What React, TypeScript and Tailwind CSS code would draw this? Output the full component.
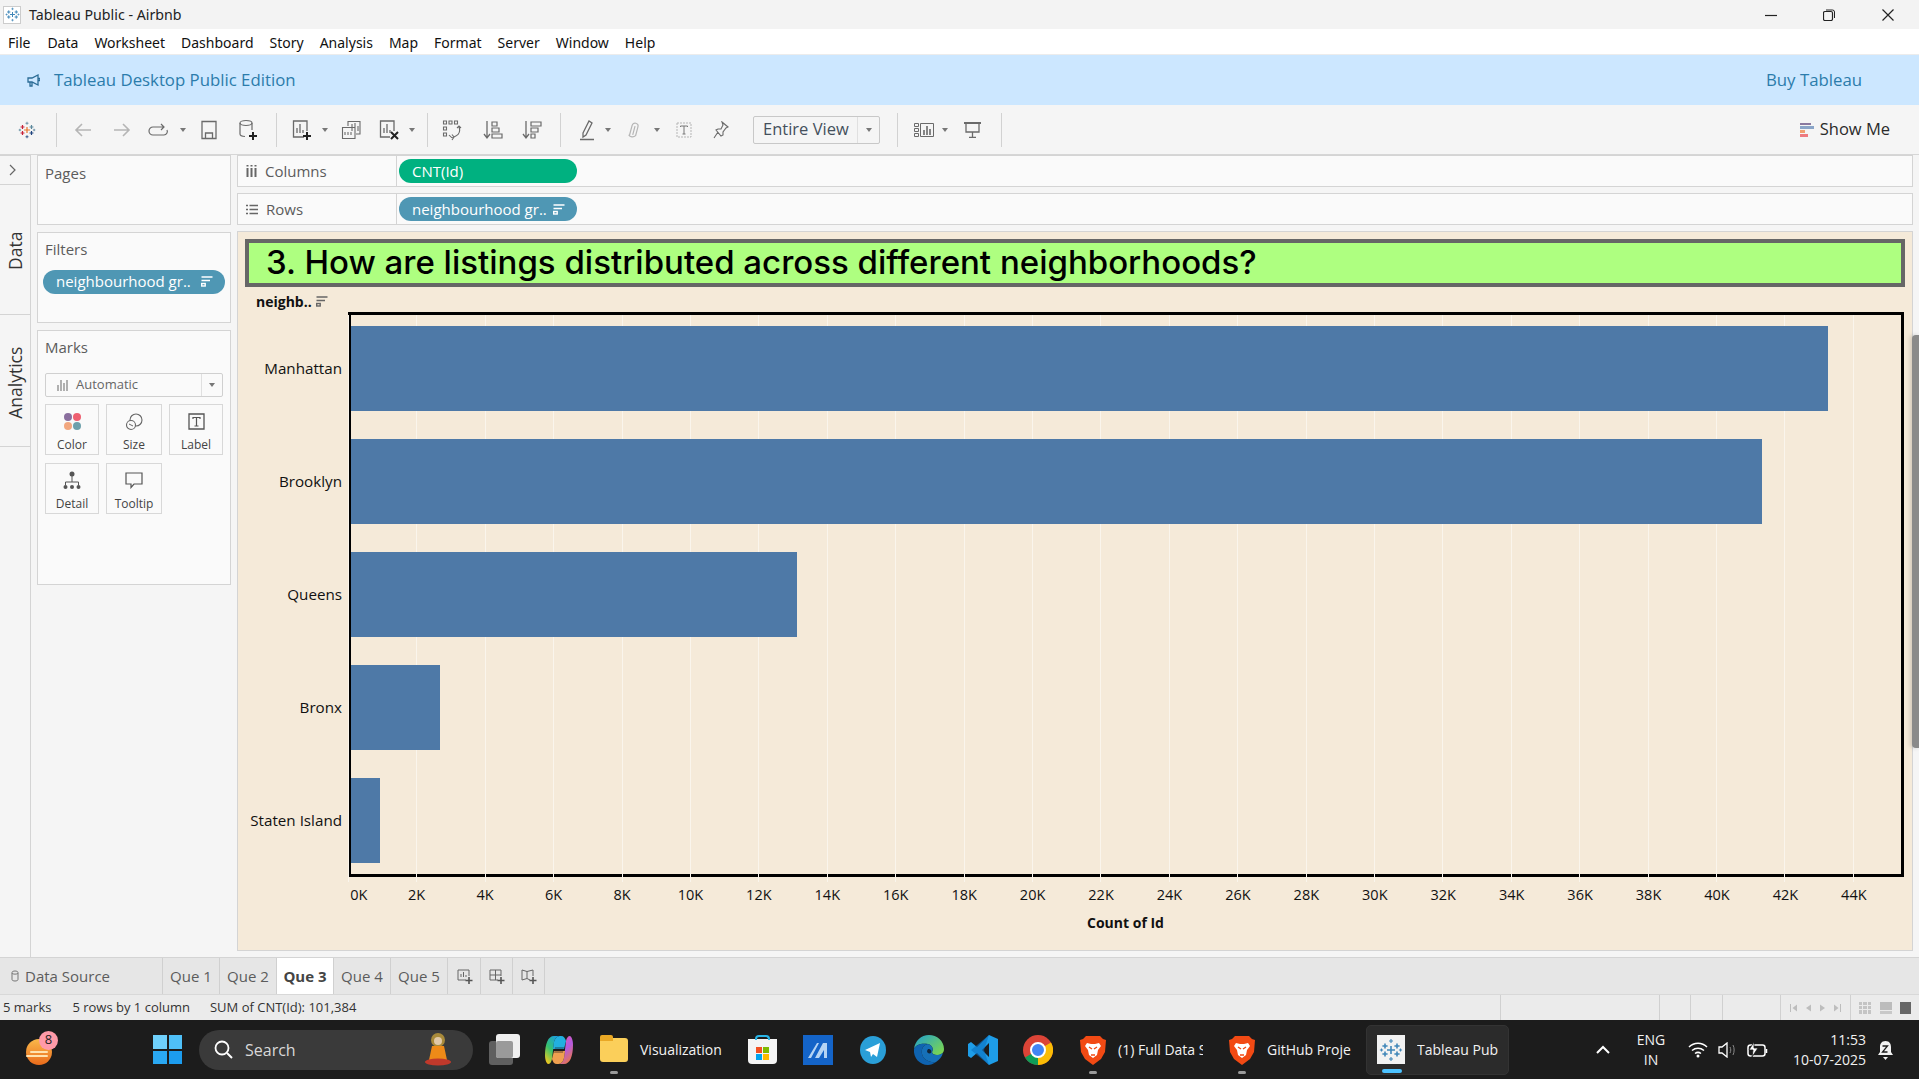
import type { ReactNode } from "react";

const TICKS = Array.from({ length: 23 }, (_, i) => i * 2);
const PX_PER_K = 34.2;

const BARS = [
  { name: "Manhattan", count: 43280 },
  { name: "Brooklyn", count: 41345 },
  { name: "Queens", count: 13130 },
  { name: "Bronx", count: 2690 },
  { name: "Staten Island", count: 939 },
];

const MENU = [
  { label: "File", cls: "ml-[8px]" },
  { label: "Data", cls: "ml-[17px]" },
  { label: "Worksheet", cls: "ml-[16px]" },
  { label: "Dashboard", cls: "ml-[16px]" },
  { label: "Story", cls: "ml-[16px]" },
  { label: "Analysis", cls: "ml-[16px]" },
  { label: "Map", cls: "ml-[16px]" },
  { label: "Format", cls: "ml-[16px]" },
  { label: "Server", cls: "ml-[16px]" },
  { label: "Window", cls: "ml-[16px]" },
  { label: "Help", cls: "ml-[16px]" },
];

function Svg({ w, h, className, children }: { w: number; h: number; className?: string; children: ReactNode }) {
  return (
    <svg width={w} height={h} viewBox={`0 0 ${w} ${h}`} fill="none" stroke="currentColor" className={`shrink-0 ${className ?? ""}`}>
      {children}
    </svg>
  );
}

function Caret({ className }: { className?: string }) {
  return <div className={`h-0 w-0 shrink-0 border-x-[3px] border-t-[4px] border-x-transparent border-t-[#777] ${className ?? ""}`} />;
}

function Sep({ className }: { className?: string }) {
  return <div className={`h-[34px] w-px shrink-0 bg-[#d2d2d2] ${className ?? ""}`} />;
}

function SortIcon({ color }: { color: string }) {
  return (
    <Svg w={12} h={11} className="shrink-0">
      <g stroke={color} strokeWidth="1.4">
        <path d="M0.5 1h11M0.5 4.5h8.5" />
        <rect x="0.7" y="7.5" width="3.5" height="2.5" />
      </g>
    </Svg>
  );
}

function TableauLogo({ size, mono }: { size: number; mono?: boolean }) {
  const c = mono
    ? ["#3f86b8", "#3f86b8", "#3f86b8", "#3f86b8", "#3f86b8"]
    : ["#e8762d", "#c72037", "#5b879b", "#1f447e", "#59879b"];
  const plus = (x: number, y: number, r: number, col: string) => (
    <path d={`M${x - r} ${y}h${r * 2}M${x} ${y - r}v${r * 2}`} stroke={col} strokeWidth={r > 2 ? 1.6 : 1.1} />
  );
  return (
    <svg width={size} height={size} viewBox="0 0 24 24" fill="none" className="shrink-0">
      {plus(12, 12, 4, c[0])}
      {plus(6, 8, 2.6, c[1])}
      {plus(18, 8, 2.6, c[2])}
      {plus(6, 16, 2.6, c[1])}
      {plus(18, 16, 2.6, c[3])}
      {plus(12, 3, 2, c[2])}
      {plus(12, 21, 2, c[3])}
      {plus(2.5, 12, 1.6, c[4])}
      {plus(21.5, 12, 1.6, c[2])}
    </svg>
  );
}

function Pill({ label, color, sort, className }: { label: string; color: string; sort?: boolean; className?: string }) {
  return (
    <div className={`flex items-center justify-between rounded-full pl-[13px] pr-[12px] text-[15px] text-white ${color} ${className ?? ""}`}>
      <span className="leading-none">{label}</span>
      {sort && <SortIcon color="#ffffff" />}
    </div>
  );
}

function Shelf({ icon, label, children, className }: { icon: ReactNode; label: string; children: ReactNode; className?: string }) {
  return (
    <div className={`flex h-[32px] items-center border border-[#d4d4d4] bg-[#fafafa] ${className ?? ""}`}>
      <div className="flex h-full w-[159px] items-center border-r border-[#d4d4d4] pl-[8px] text-[15px] text-[#5c5c5c]">
        {icon}
        <span className="ml-[8px]">{label}</span>
      </div>
      {children}
    </div>
  );
}

function MarkBtn({ label, icon, className }: { label: string; icon: ReactNode; className?: string }) {
  return (
    <div className={`flex h-[51px] flex-col items-center justify-between border border-[#d8d8d8] bg-[#fafafa] pb-[2px] pt-[7px] text-[12px] leading-[14px] text-[#444] ${className ?? ""}`}>
      <div className="flex h-[20px] items-center justify-center">{icon}</div>
      <span>{label}</span>
    </div>
  );
}

function Chart() {
  return (
    <div className="mx-[7px] flex flex-col">
      <div className="flex h-[48px] items-center border-[4px] border-[#666666] bg-[#aeff80] pl-[17px] font-['Inter',sans-serif] text-[33px] font-medium text-black">
        3. How are listings distributed across different neighborhoods?
      </div>
      <div className="flex h-[25px] items-center pl-[11px] pt-[3px] text-[14px] font-bold text-[#111]">
        <span>neighb..</span>
        <span className="ml-[4px]">
          <SortIcon color="#666666" />
        </span>
      </div>
      <div className="flex items-start">
        <div className="flex w-[103px] flex-col gap-[28px] pt-[14px]">
          {BARS.map((b) => (
            <div key={b.name} className="flex h-[85px] items-center justify-end pr-[6px] text-[15.2px] font-medium text-[#111]">
              {b.name}
            </div>
          ))}
        </div>
        <div className="relative h-[565px] w-[1556px] border-[3px] border-black">
          {TICKS.map((t) => (
            <div
              key={t}
              className="absolute -bottom-[8px] -top-0 w-px bg-[#faf5ec]"
              style={{ left: t * PX_PER_K - 3 }}
            />
          ))}
          <div className="relative flex flex-col gap-[28px] pt-[11px]">
            {BARS.map((b) => (
              <div
                key={b.name}
                className="h-[85px] bg-[#4e79a7]"
                style={{ width: (b.count / 1000) * PX_PER_K - 3 }}
              />
            ))}
          </div>
        </div>
      </div>
      <div className="ml-[69px] flex h-[35px] items-center text-[14.5px] text-[#111]">
        {TICKS.map((t) => (
          <div key={t} className={`w-[68.45px] shrink-0 text-center ${t === 0 ? "pl-[21px]" : ""}`}>
            {t}K
          </div>
        ))}
      </div>
      <div className="ml-[103px] flex w-[1556px] justify-center pr-[1px] text-[14px] font-bold text-[#111]">Count of Id</div>
    </div>
  );
}

function Toolbar() {
  const on = "text-[#6a6a6a]";
  const off = "text-[#b5b5b5]";
  return (
    <div className="flex h-[50px] shrink-0 items-center border-b border-[#d6d6d6] bg-[#f5f5f5] pl-[18px] pr-[29px]">
      <TableauLogo size={18} />
      <Sep className="ml-[20px]" />
      <Svg w={20} h={16} className={`ml-[16px] ${off}`}>
        <path d="M18 8H3M9 2L3 8l6 6" strokeWidth="1.6" />
      </Svg>
      <Svg w={20} h={16} className={`ml-[19px] ${off}`}>
        <path d="M2 8h15M11 2l6 6-6 6" strokeWidth="1.6" />
      </Svg>
      <Svg w={22} h={14} className={`ml-[16px] ${on}`}>
        <path d="M16 4H5a3.5 3.5 0 0 0 0 8h11a3.5 3.5 0 0 0 3-5M13 1l3 3-3 3" strokeWidth="1.2" />
      </Svg>
      <Caret className="ml-[10px]" />
      <Svg w={18} h={20} className={`ml-[14px] ${on}`}>
        <path d="M2 1.5h14v17H2zM5.5 18v-5h7v5" strokeWidth="1.3" />
      </Svg>
      <Svg w={20} h={22} className={`ml-[20px] ${on}`}>
        <ellipse cx="8" cy="4" rx="6" ry="2.5" strokeWidth="1.2" />
        <path d="M2 4v11c0 1.4 2 2.4 5 2.5M14 4v7" strokeWidth="1.2" />
        <path d="M15 13v8M11 17h8" stroke="#222" strokeWidth="2" />
      </Svg>
      <Sep className="ml-[18px]" />
      <Svg w={20} h={22} className={`ml-[15px] ${on}`}>
        <path d="M12 18H1.5V2H15v10M5 14V9M8 14V5M11 14v-3" strokeWidth="1.3" />
        <path d="M15 13v8M11 17h8" stroke="#222" strokeWidth="2" />
      </Svg>
      <Caret className="ml-[10px]" />
      <Svg w={20} h={20} className={`ml-[13px] ${on}`}>
        <path d="M7 6V1.5h12V14h-4M1.5 7.5H14V18.5H1.5zM11 4v7M14 3v6M17 6v5M4 15v-3M7 15v-3M10 15v-3" strokeWidth="1.1" />
      </Svg>
      <Svg w={20} h={22} className={`ml-[18px] ${on}`}>
        <path d="M11 18H1.5V2H15v10M5 14V9M8 14V5M11 14v-3" strokeWidth="1.3" />
        <path d="M12 13l7 7M19 13l-7 7" stroke="#222" strokeWidth="2" />
      </Svg>
      <Caret className="ml-[10px]" />
      <Sep className="ml-[12px]" />
      <Svg w={20} h={22} className={`ml-[14px] ${on}`}>
        <path d="M1.5 2h3v3h-3zM7 2h3v3H7zM12.5 2h3v3h-3zM1.5 8h3v3h-3zM1.5 14h3v3h-3zM17 8c1.5 4 0 8-5 10M7 16c1.500 2 3 3 5 3M10 15.500l2 2.500-2 3M15 9l2-2 2 2" strokeWidth="1.1" />
      </Svg>
      <Svg w={20} h={20} className={`ml-[21px] ${on}`}>
        <path d="M4 1v16M1 14l3 4 3-4" strokeWidth="1.3" />
        <path d="M9 2h5v4H9zM9 8h7v4H9zM9 14h10v4H9z" strokeWidth="1.2" />
      </Svg>
      <Svg w={20} h={20} className={`ml-[19px] ${on}`}>
        <path d="M4 1v16M1 14l3 4 3-4" strokeWidth="1.3" />
        <path d="M9 2h10v4H9zM9 8h7v4H9zM9 14h4v4H9z" strokeWidth="1.2" />
      </Svg>
      <Sep className="ml-[18px]" />
      <Svg w={16} h={22} className={`ml-[18px] ${on}`}>
        <path d="M4 14L10 2l3 2-6 12-3 2zM1 20.500h14" strokeWidth="1.3" />
      </Svg>
      <Caret className="ml-[10px]" />
      <Svg w={16} h={20} className={`ml-[15px] ${off}`}>
        <path d="M5 16V6a3 3 0 0 1 6 0v9a4.500 4.500 0 0 1-7 1M8 6v9" strokeWidth="1.2" transform="rotate(15 8 10)" />
      </Svg>
      <Caret className="ml-[12px]" />
      <Svg w={16} h={16} className={`ml-[16px] ${off}`}>
        <path d="M1 1h14v14H1z" strokeWidth="1" strokeDasharray="2 1" />
        <path d="M4.500 5V4h7v1M8 4v8M6.500 12h3" stroke="#777" strokeWidth="1" />
      </Svg>
      <Svg w={16} h={18} className={`ml-[21px] ${on}`}>
        <path d="M9 1l6 5-2 1-3 4 0 3-2 1-5-6 2-1h3l2-4zM5 11l-4 6" strokeWidth="1.1" />
      </Svg>
      <div className="ml-[24px] flex h-[28px] w-[127px] shrink-0 items-center rounded-[2px] border border-[#c8c8c8] text-[16.5px] text-[#44505c]">
        <span className="w-[103px] pl-[9px]">Entire View</span>
        <div className="flex h-full flex-1 items-center justify-center border-l border-[#e0e0e0]">
          <Caret />
        </div>
      </div>
      <Sep className="ml-[17px]" />
      <Svg w={20} h={14} className={`ml-[16px] ${on}`}>
        <path d="M0.500 0.500h4v3h-4zM0.500 5.500h4v3h-4zM0.500 10.500h4v3h-4zM6.500 0.500h13v13h-13z" strokeWidth="1" />
        <path d="M10 12V7M13 12V3M16 12V6" strokeWidth="1.6" />
      </Svg>
      <Caret className="ml-[8px]" />
      <Svg w={17} h={16} className={`ml-[16px] ${on}`}>
        <path d="M0 1h17" strokeWidth="2" />
        <path d="M2 1v9h13V1M8.500 10v5M5 15.500h7" strokeWidth="1.3" />
      </Svg>
      <Sep className="ml-[20px]" />
      <div className="ml-auto flex items-center text-[16.5px] text-[#2b2b2b]">
        <div className="flex h-[14px] w-[14px] flex-col gap-px">
          <div className="h-[3px] w-[11px] bg-[#8a7aa0]" />
          <div className="h-[3px] w-[14px] bg-[#8aa5c8]" />
          <div className="h-[3px] w-[5px] bg-[#f0a070]" />
          <div className="h-[3px] w-[8px] bg-[#ee7a80]" />
        </div>
        <span className="ml-[6px]">Show Me</span>
      </div>
    </div>
  );
}

function Sidebar() {
  return (
    <div className="ml-[6px] flex w-[194px] shrink-0 flex-col gap-[7px]">
      <div className="h-[70px] border border-[#d4d4d4] bg-[#fafafa] pl-[7px] pt-[6px] text-[15px] text-[#5c5c5c]">Pages</div>
      <div className="h-[91px] border border-[#d4d4d4] bg-[#fafafa] pt-[5px] text-[15px] text-[#5c5c5c]">
        <div className="pl-[7px]">Filters</div>
        <Pill label="neighbourhood gr.." color="bg-[#4f97b4]" sort className="ml-[5px] mt-[9px] h-[24px] w-[182px]" />
      </div>
      <div className="h-[255px] border border-[#d4d4d4] bg-[#fafafa] px-[7px] pt-[5px] text-[15px] text-[#5c5c5c]">
        <div>Marks</div>
        <div className="mt-[14px] flex h-[24px] items-center rounded-[2px] border border-[#d0d0d0] text-[13px] text-[#666]">
          <div className="flex w-[155px] items-center pl-[11px]">
            <Svg w={11} h={12} className="text-[#666]">
              <path d="M1 12V6M4 12V1M7 12V4M10 12V1" strokeWidth="1" />
            </Svg>
            <span className="ml-[8px]">Automatic</span>
          </div>
          <div className="flex h-full flex-1 items-center justify-center border-l border-[#e0e0e0]">
            <Caret />
          </div>
        </div>
        <div className="mt-[7px] grid grid-cols-[54px_56px_54px] gap-x-[7px] gap-y-[8px]">
          <MarkBtn
            label="Color"
            icon={
              <div className="grid grid-cols-2 gap-px">
                <div className="h-[8px] w-[8px] rounded-full bg-[#8a6f9e]" />
                <div className="h-[8px] w-[8px] rounded-full bg-[#ee5f70]" />
                <div className="h-[8px] w-[8px] rounded-full bg-[#f2a77f]" />
                <div className="h-[8px] w-[8px] rounded-full bg-[#6ea0ab]" />
              </div>
            }
          />
          <MarkBtn
            label="Size"
            icon={
              <Svg w={18} h={18} className="text-[#666]">
                <circle cx="11" cy="7" r="6" strokeWidth="1.1" />
                <circle cx="6" cy="12" r="4.500" fill="#fafafa" strokeWidth="1.1" />
                <path d="M4 11l4 2" strokeWidth="1" />
              </Svg>
            }
          />
          <MarkBtn
            label="Label"
            icon={
              <Svg w={17} h={17} className="text-[#555]">
                <path d="M1 1h15v15H1z" strokeWidth="1.3" />
                <path d="M5 6V4.500h7V6M8.500 4.500V13M6.500 13h4" strokeWidth="1.2" />
              </Svg>
            }
          />
          <MarkBtn
            label="Detail"
            icon={
              <Svg w={18} h={19} className="text-[#555]">
                <circle cx="9" cy="3" r="2.500" fill="#555" stroke="none" />
                <path d="M9 5v6M2.500 14v-3h13v3" strokeWidth="1" />
                <g fill="#555" stroke="none">
                  <circle cx="2.500" cy="16" r="2" />
                  <circle cx="9" cy="16" r="2" />
                  <circle cx="15.500" cy="16" r="2" />
                </g>
              </Svg>
            }
          />
          <MarkBtn
            label="Tooltip"
            icon={
              <Svg w={18} h={17} className="text-[#555]">
                <path d="M1 1h16v11H9l-3 3.500V12H1z" strokeWidth="1.2" />
              </Svg>
            }
          />
        </div>
      </div>
    </div>
  );
}

function Rail() {
  return (
    <div className="flex w-[31px] shrink-0 flex-col border-r border-[#d4d4d4] text-[17.5px] text-[#333]">
      <div className="flex h-[30px] items-center border-b border-t border-[#d4d4d4] pl-[9px]">
        <Svg w={7} h={12} className="text-[#666]">
          <path d="M1 1l5 5-5 5" strokeWidth="1.2" />
        </Svg>
      </div>
      <div className="flex h-[130px] items-center justify-center border-b border-[#d4d4d4] pl-[2px] pt-[3px]">
        <span className="-rotate-90 leading-none">Data</span>
      </div>
      <div className="flex h-[132px] items-center justify-center border-b border-[#d4d4d4] pl-[2px] pt-[4px]">
        <span className="-rotate-90 leading-none">Analytics</span>
      </div>
    </div>
  );
}

function Tabs() {
  const sheets = ["Que 1", "Que 2", "Que 3", "Que 4", "Que 5"];
  return (
    <div className="flex h-[37px] shrink-0 items-stretch border-t border-[#d4d4d4] bg-[#e6e6e6] text-[15px] text-[#5c5c5c]">
      <div className="flex w-[163px] items-center border-r border-[#d0d0d0] pl-[11px]">
        <Svg w={8} h={12} className="text-[#777]">
          <path d="M1 2.500c0-2 6-2 6 0v7c0 2-6 2-6 0zM1 3c0 1.500 6 1.500 6 0" strokeWidth="1" />
        </Svg>
        <span className="ml-[6px]">Data Source</span>
      </div>
      {sheets.map((s) => (
        <div
          key={s}
          className={`flex w-[57px] items-center justify-center border-r border-[#d0d0d0] ${s === "Que 3" ? "bg-white font-bold text-[#444]" : ""}`}
        >
          {s}
        </div>
      ))}
      <div className="ml-px flex w-[32px] items-center justify-center border-r border-[#d0d0d0]">
        <Svg w={16} h={15} className="text-[#666]">
          <path d="M9 11H1V1h11v6M4 8V5M6.500 8V3M9 8V6" strokeWidth="1" />
          <path d="M12 8v7M8.500 11.500h7" stroke="#555" strokeWidth="1.6" />
        </Svg>
      </div>
      <div className="flex w-[32px] items-center justify-center border-r border-[#d0d0d0]">
        <Svg w={16} h={15} className="text-[#666]">
          <path d="M9 11H1V1h11v6M1 6h11M6.500 1v10" strokeWidth="1" />
          <path d="M12 8v7M8.500 11.500h7" stroke="#555" strokeWidth="1.6" />
        </Svg>
      </div>
      <div className="flex w-[32px] items-center justify-center border-r border-[#d0d0d0]">
        <Svg w={16} h={15} className="text-[#666]">
          <path d="M9 11l-3-1.500L1 11V1l5 1.500L12 1v6M6 2.500v7" strokeWidth="1" />
          <path d="M12 8v7M8.500 11.500h7" stroke="#555" strokeWidth="1.6" />
        </Svg>
      </div>
    </div>
  );
}

function StatusBar() {
  return (
    <div className="flex h-[26px] shrink-0 items-stretch border-t border-[#d8d8d8] bg-[#ebebeb] text-[13px] text-[#333]">
      <div className="flex items-center pl-[3px]">5 marks</div>
      <div className="ml-[21px] flex items-center">5 rows by 1 column</div>
      <div className="ml-[20px] flex items-center">SUM of CNT(Id): 101,384</div>
      <div className="ml-auto flex w-[159px] border-l border-[#d0d0d0]" />
      <div className="w-[31px] border-l border-[#d0d0d0]" />
      <div className="w-[32px] border-l border-[#d0d0d0]" />
      <div className="w-[58px] border-l border-[#d0d0d0]" />
      <div className="flex w-[70px] items-center justify-around border-l border-[#d0d0d0] px-[5px] text-[#bdbdbd]">
        <Svg w={7} h={8}><path d="M0.500 0v8M7 0.500L2.500 4 7 7.500z" fill="currentColor" stroke="none" /><path d="M0.500 0v8" /></Svg>
        <Svg w={5} h={8}><path d="M5 0.500L0 4l5 3.500z" fill="currentColor" stroke="none" /></Svg>
        <Svg w={5} h={8}><path d="M0 0.500L5 4 0 7.500z" fill="currentColor" stroke="none" /></Svg>
        <Svg w={7} h={8}><path d="M0 0.500L4.500 4 0 7.500z" fill="currentColor" stroke="none" /><path d="M6.500 0v8" /></Svg>
      </div>
      <div className="flex w-[69px] items-center justify-between border-l border-[#d0d0d0] px-[8px]">
        <div className="grid h-[12px] w-[12px] grid-cols-3 gap-px">
          {Array.from({ length: 9 }, (_, i) => (
            <div key={i} className="bg-[#c4c4c4]" />
          ))}
        </div>
        <div className="flex h-[12px] w-[12px] flex-col gap-px">
          <div className="h-[8px] bg-[#bcbcbc]" />
          <div className="h-[3px] bg-[#c8c8c8]" />
        </div>
        <div className="h-[12px] w-[11px] bg-[#666]" />
      </div>
    </div>
  );
}

function Dot() {
  return <div className="absolute -bottom-[9px] left-1/2 h-[3px] w-[8px] -translate-x-1/2 rounded-full bg-[#9a9a9a]" />;
}

function Brave({ className }: { className?: string }) {
  return (
    <div className={`relative shrink-0 ${className ?? ""}`}>
      <svg width="26" height="30" viewBox="0 0 26 30" className="block">
        <path d="M6 1h14l3 3 3 1-1 12-4 7-8 6-8-6-4-7L0 5l3-1z" fill="#f24a14" />
        <path d="M7 8l4 1h4l4-1 2 3-3 4-1 5-4 3-4-3-1-5-3-4z" fill="#ffffff" />
        <path d="M9 12l3 2M17 12l-3 2M11 20h4" stroke="#f24a14" strokeWidth="1.4" />
      </svg>
      <Dot />
    </div>
  );
}

function Taskbar() {
  return (
    <div className="flex h-[59px] shrink-0 items-center bg-[#1c1c1c] text-[14px] text-[#f2f2f2]">
      <div className="relative ml-[26px] h-[30px] w-[28px] shrink-0">
        <div className="absolute bottom-0 left-0 h-[26px] w-[26px] rounded-full bg-gradient-to-b from-[#f8b84a] to-[#e96a1a]" />
        <div className="absolute bottom-[12px] left-[4px] h-[2px] w-[18px] rounded bg-[#ffe3b0]" />
        <div className="absolute bottom-[8px] left-0 h-[2px] w-[22px] rounded bg-[#ffe3b0]" />
        <div className="absolute -right-[4px] -top-[4px] flex h-[19px] w-[19px] items-center justify-center rounded-full bg-[#ff9aa8] text-[13px] text-[#222]">8</div>
      </div>
      <div className="ml-[99px] grid h-[29px] w-[29px] shrink-0 grid-cols-2 gap-[2px]">
        <div className="bg-[#6fd0fb]" />
        <div className="bg-[#4fc0f8]" />
        <div className="bg-[#2aa8f2]" />
        <div className="bg-[#1c9cee]" />
      </div>
      <div className="ml-[17px] flex h-[40px] w-[274px] shrink-0 items-center rounded-full bg-[#3a3a3a] pl-[15px] pr-[22px] text-[16px] text-[#d8d8d8]">
        <Svg w={19} h={19} className="text-white">
          <circle cx="8" cy="8" r="6.500" strokeWidth="1.8" />
          <path d="M13 13l5 5" strokeWidth="2" />
        </Svg>
        <span className="ml-[12px]">Search</span>
        <svg width="26" height="36" viewBox="0 0 26 36" className="ml-auto shrink-0">
          <circle cx="13" cy="8" r="7" fill="#a88a3a" />
          <circle cx="13" cy="9" r="4" fill="#e0c8a8" />
          <path d="M7 14h12l3 14H4z" fill="#ee8a18" />
          <ellipse cx="13" cy="30" rx="13" ry="3.500" fill="#c0392b" />
        </svg>
      </div>
      <div className="relative ml-[16px] h-[31px] w-[31px] shrink-0">
        <div className="absolute bottom-0 left-0 h-[24px] w-[24px] rounded-[3px] bg-[#5f5f5f]" />
        <div className="absolute right-0 top-0 h-[24px] w-[24px] rounded-[3px] bg-[#efefef]" />
        <div className="absolute bottom-[7px] left-[7px] h-[17px] w-[17px] rounded-[2px] bg-[#9a9a9a]" />
      </div>
      <svg width="28" height="30" viewBox="0 0 28 30" className="ml-[25px] shrink-0">
        <defs>
          <linearGradient id="copL" x1="0.8" y1="0" x2="0.2" y2="1">
            <stop offset="0" stopColor="#1a9ce8" />
            <stop offset="0.55" stopColor="#36c26e" />
            <stop offset="1" stopColor="#f2c81e" />
          </linearGradient>
          <linearGradient id="copR" x1="0.2" y1="0" x2="0.8" y2="1">
            <stop offset="0" stopColor="#e85aa8" />
            <stop offset="0.5" stopColor="#b45ae0" />
            <stop offset="1" stopColor="#f07a3a" />
          </linearGradient>
        </defs>
        <path d="M9 1h7c-4 0-6 2-7 6L7 24c-.5 3-2 5-4 5-2-1-3-5-3-9C0 9 3 1 9 1z" fill="url(#copL)" />
        <path d="M19 29h-7c4 0 6-2 7-6l2-17c.5-3 2-5 4-5 2 1 3 5 3 9 0 11-3 19-9 19z" fill="url(#copR)" />
        <path d="M9 7c1-4 3-6 7-6 3 0 4 2 5 5l-2 8H8z" fill="#22b0e0" />
        <path d="M19 23c-1 4-3 6-7 6-3 0-4-2-5-5l2-8h11z" fill="#f0a050" />
        <path d="M10 12h9l-1 6H9z" fill="#1c1c1c" opacity="0.35" />
      </svg>
      <div className="relative ml-[27px] h-[24px] w-[28px] shrink-0 rounded-[3px] bg-[#fbcf5a]">
        <div className="absolute -top-[3px] left-0 h-[6px] w-[13px] rounded-t-[2px] bg-[#e9a825]" />
        <div className="absolute -bottom-[12px] left-1/2 h-[3px] w-[8px] -translate-x-1/2 rounded-full bg-[#9a9a9a]" />
      </div>
      <span className="ml-[12px] w-[84px] shrink-0 whitespace-nowrap">Visualization</span>
      <div className="relative ml-[24px] h-[25px] w-[29px] shrink-0 translate-y-[2px] rounded-b-[4px] bg-[#f4f4f4]">
        <div className="absolute -top-[4px] left-[7px] h-[5px] w-[15px] rounded-t border-x-2 border-t-2 border-[#29b6e8]" />
        <div className="absolute left-[8px] top-[8px] grid h-[13px] w-[13px] grid-cols-2 gap-px">
          <div className="bg-[#f25022]" />
          <div className="bg-[#7fba00]" />
          <div className="bg-[#00a4ef]" />
          <div className="bg-[#ffb900]" />
        </div>
      </div>
      <svg width="30" height="30" viewBox="0 0 30 30" className="ml-[26px] shrink-0">
        <rect width="30" height="30" fill="#1464c8" />
        <path d="M5 23L14 8h2L8 23zM12 23l8-15h4v15h-3v-8l-5 8z" fill="#b4d4f4" />
      </svg>
      <svg width="26" height="30" viewBox="0 0 26 30" className="ml-[27px] shrink-0">
        <ellipse cx="13" cy="15" rx="13" ry="14" fill="#2a9fd8" />
        <path d="M5 15l15-7-3 14-4-3-2 3-1-5z" fill="#ffffff" />
      </svg>
      <svg width="31" height="30" viewBox="0 0 31 30" className="ml-[27px] shrink-0">
        <defs>
          <linearGradient id="edg" x1="0" y1="0" x2="1" y2="0.8">
            <stop offset="0" stopColor="#1f9fd0" />
            <stop offset="1" stopColor="#7bd651" />
          </linearGradient>
        </defs>
        <path d="M1 14C2 6 8 0 16 0c8 0 15 6 15 14 0 4-3 6-7 6-3 0-5-1-5-3 2-3 0-7-4-8C9 8 3 9 1 14z" fill="url(#edg)" />
        <path d="M1 14c2-5 8-6 14-5-5 1-7 5-6 10 1 5 7 9 14 8-3 2-5 3-8 3C7 30 0 23 1 14z" fill="#0f63b0" />
        <path d="M9 19c-1-5 1-9 6-10 4 1 6 5 4 8 0 2 2 3 5 3 2 0 4-1 6-2-1 4-4 7-7 9-7 1-13-3-14-8z" fill="#1670b8" />
        <path d="M15 14c3 0 4 2 3 4-2 1-4 0-4-2z" fill="#12263a" />
      </svg>
      <svg width="30" height="30" viewBox="0 0 30 30" className="ml-[24px] shrink-0">
        <path d="M21 0l9 4v22l-9 4L9 18l-6 5-3-2v-12l3-2 6 5zM21 8l-7 7 7 7z" fill="#1e9de8" fillRule="evenodd" />
        <path d="M21 0L3 15l18 15-5-15z" fill="#0a70bf" opacity="0.6" />
      </svg>
      <svg width="30" height="30" viewBox="0 0 30 30" className="ml-[25px] shrink-0">
        <circle cx="15" cy="15" r="15" fill="#db4437" />
        <path d="M15 15L2 22.500A15 15 0 0 0 15 30z" fill="#0f9d58" />
        <path d="M15 15l13-7.500A15 15 0 0 1 15 30z" fill="#fbbc05" />
        <circle cx="15" cy="15" r="7" fill="#4285f4" stroke="#fff" strokeWidth="2" />
      </svg>
      <Brave className="ml-[27px]" />
      <span className="ml-[12px] w-[85px] shrink-0 overflow-hidden whitespace-nowrap">(1) Full Data S</span>
      <Brave className="ml-[26px]" />
      <span className="ml-[12px] w-[85px] shrink-0 overflow-hidden whitespace-nowrap">GitHub Proje</span>
      <div className="relative ml-[14px] flex h-[50px] w-[143px] shrink-0 items-center rounded-[5px] border border-[#333] bg-[#2b2b2b] pl-[10px]">
        <div className="flex h-[29px] w-[28px] items-center justify-center bg-[#f2f2f2]">
          <TableauLogo size={24} mono />
        </div>
        <span className="ml-[12px] w-[81px] overflow-hidden whitespace-nowrap">Tableau Pub</span>
        <div className="absolute bottom-px left-[15px] h-[4px] w-[20px] rounded-full bg-[#4cc2ff]" />
      </div>
      <Svg w={14} h={9} className="ml-[87px] text-white">
        <path d="M1 8l6-6 6 6" strokeWidth="2" />
      </Svg>
      <div className="ml-[26px] flex w-[30px] shrink-0 flex-col items-center text-[14px] leading-[20px]">
        <span>ENG</span>
        <span>IN</span>
      </div>
      <Svg w={20} h={17} className="ml-[22px] text-white">
        <path d="M1 6c5-5 13-5 18 0M4 9.500c3.500-3 8.500-3 12 0M7 12.500c2-1.500 4-1.500 6 0" strokeWidth="1.500" />
        <circle cx="10" cy="15" r="1.500" fill="#fff" stroke="none" />
      </Svg>
      <Svg w={19} h={16} className="ml-[10px] text-white">
        <path d="M1 5h3l5-4v14l-5-4H1z" strokeWidth="1.300" />
        <path d="M12 5c1 2 1 4 0 6M15 3c1.500 3 1.500 7 0 10" strokeWidth="1" stroke="#888" />
      </Svg>
      <Svg w={21} h={16} className="ml-[10px] text-white">
        <rect x="1" y="3" width="17" height="11" rx="2.500" strokeWidth="1.500" />
        <path d="M19.500 7v4" strokeWidth="1.500" />
        <path d="M7 0L2 8h4l-1 7 6-9H7z" fill="#fff" stroke="#1c1c1c" strokeWidth="0.800" />
      </Svg>
      <div className="ml-[20px] flex w-[78px] shrink-0 flex-col items-end whitespace-nowrap text-[14px] leading-[20px]">
        <span>11:53</span>
        <span>10-07-2025</span>
      </div>
      <svg width="17" height="20" viewBox="0 0 17 20" className="ml-[11px] shrink-0">
        <path d="M8.500 1c4 0 5.500 3 5.500 6v5l2 3H1l2-3V7c0-3 1.500-6 5.500-6z" fill="#f2f2f2" />
        <path d="M6 17h5l-2.500 3z" fill="#f2f2f2" />
        <path d="M5.500 6h5l-5 6h5" stroke="#1c1c1c" strokeWidth="1.300" fill="none" />
      </svg>
    </div>
  );
}

export default function App() {
  return (
    <div className="relative flex h-[1079px] w-[1919px] flex-col overflow-hidden bg-[#f5f5f5] font-['Open_Sans',sans-serif]">
      {/* window title */}
      <div className="flex h-[29px] shrink-0 items-center bg-[#f3f3f3] pl-[3px] font-['Noto_Sans',sans-serif] text-[14.2px] text-[#222]">
        <div className="flex h-[18px] w-[18px] items-center justify-center border border-[#ccc] bg-white">
          <TableauLogo size={15} mono />
        </div>
        <span className="ml-[8px]">Tableau Public - Airbnb</span>
        <div className="ml-auto flex items-center pr-[25px]">
          <Svg w={12} h={12} className="text-[#222]">
            <path d="M0 6.500h12" strokeWidth="1.200" />
          </Svg>
          <Svg w={12} h={12} className="ml-[46px] text-[#222]">
            <rect x="0.500" y="2.500" width="9" height="9" rx="1.500" strokeWidth="1.200" />
            <path d="M3 1h6.500A2 2 0 0 1 11.500 3v6" strokeWidth="1" />
          </Svg>
          <Svg w={12} h={12} className="ml-[47px] text-[#222]">
            <path d="M0.500 0.500l11 11M11.500 0.500l-11 11" strokeWidth="1.200" />
          </Svg>
        </div>
      </div>
      {/* menu */}
      <div className="flex h-[26px] shrink-0 items-center border-b border-[#ececec] bg-white pt-px font-['Noto_Sans',sans-serif] text-[14px] text-[#111]">
        {MENU.map((m) => (
          <span key={m.label} className={m.cls}>
            {m.label}
          </span>
        ))}
      </div>
      {/* public edition banner */}
      <div className="flex h-[50px] shrink-0 items-center bg-[#cce7ff] pl-[27px] pr-[57px] text-[16.8px] text-[#2b7cab]">
        <Svg w={13} h={13} className="text-[#2b6c96]">
          <path d="M1 4h4l6-3v10L5 8H1zM3 8v4h2V8M11 4.500h2v2h-2" strokeWidth="1.300" />
        </Svg>
        <span className="ml-[14px]">Tableau Desktop Public Edition</span>
        <span className="ml-auto">Buy Tableau</span>
      </div>
      <Toolbar />
      <div className="flex min-h-0 flex-1">
        <Rail />
        <Sidebar />
        <div className="ml-[6px] flex w-[1676px] shrink-0 flex-col gap-[6px]">
          <Shelf
            icon={
              <Svg w={11} h={12} className="text-[#666]">
                <path d="M1.500 3v9M5.500 3v9M9.500 3v9M1.500 0v1.500M5.500 0v1.500M9.500 0v1.500" strokeWidth="2" />
              </Svg>
            }
            label="Columns"
          >
            <Pill label="CNT(Id)" color="bg-[#00b180]" className="ml-[2px] h-[24px] w-[178px]" />
          </Shelf>
          <Shelf
            icon={
              <Svg w={12} h={11} className="text-[#666]">
                <path d="M3.500 1.500H12M3.500 5.500H12M3.500 9.500H12M0 1.500h2M0 5.500h2M0 9.500h2" strokeWidth="1.600" />
              </Svg>
            }
            label="Rows"
          >
            <Pill label="neighbourhood gr.." color="bg-[#4f97b4]" sort className="ml-[2px] h-[24px] w-[178px]" />
          </Shelf>
          <div className="h-[720px] border border-[#d4d4d4] bg-[#f5ead9] pt-[7px]">
            <Chart />
          </div>
        </div>
      </div>
      <Tabs />
      <StatusBar />
      <Taskbar />
      {/* floating scrollbar overlay */}
      <div className="absolute left-[1912px] top-[335px] h-[413px] w-[8px] rounded-l-[4px] bg-[#8a8a8a] shadow-[-2px_0_4px_rgba(0,0,0,0.15)]" />
    </div>
  );
}
